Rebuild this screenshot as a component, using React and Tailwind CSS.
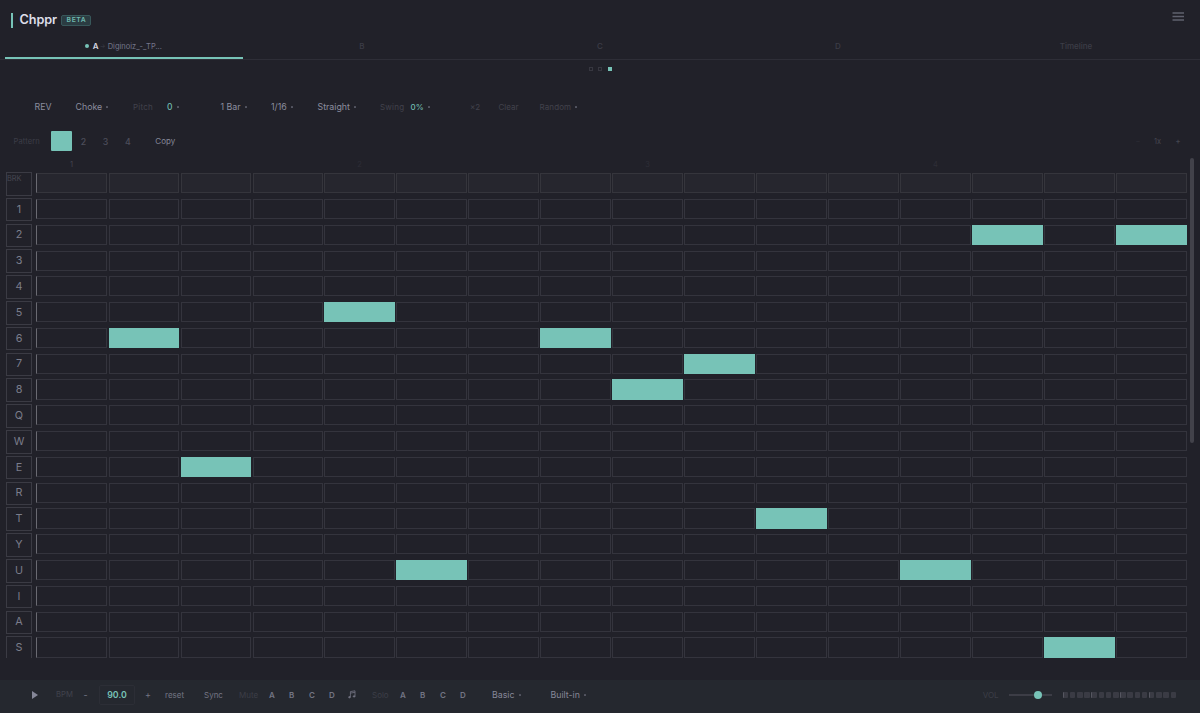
// src/App.jsx
import React from "react";

const ROWS = [
  { key: "BRK", on: [] },
  { key: "1", on: [] },
  { key: "2", on: [13, 15] },
  { key: "3", on: [] },
  { key: "4", on: [] },
  { key: "5", on: [4] },
  { key: "6", on: [1, 7] },
  { key: "7", on: [9] },
  { key: "8", on: [8] },
  { key: "Q", on: [] },
  { key: "W", on: [] },
  { key: "E", on: [2] },
  { key: "R", on: [] },
  { key: "T", on: [10] },
  { key: "Y", on: [] },
  { key: "U", on: [5, 12] },
  { key: "I", on: [] },
  { key: "A", on: [] },
  { key: "S", on: [14] },
];

const STEPS = Array.from({ length: 16 }, (_, i) => i);

function Dot() {
  return <span className="ml-[4px] size-[2px] shrink-0 rounded-[0.5px] bg-[#555662]" />;
}

// text button, optionally followed by the small dropdown dot
function Item({ className, children, dot }) {
  return (
    <div className={`flex shrink-0 items-center whitespace-nowrap ${className}`}>
      <span>{children}</span>
      {dot && <Dot />}
    </div>
  );
}

function Header() {
  return (
    <header className="flex h-[33px] items-start justify-between pr-[16px] pl-[11px]">
      <div className="flex items-center pt-[12px]">
        <span className="h-[15px] w-[1.5px] bg-[#77c3b7]" />
        <h1 className="ml-[7px] w-[41.5px] text-[12.7px] leading-[16px] font-semibold tracking-[-0.1px] text-[#dddee8]">
          Chppr
        </h1>
        <span className="flex h-[11px] w-[30px] items-center justify-center rounded-[2px] border border-[#38575a] bg-[#2b3c42] pt-[1px] pl-[1px] text-[6.8px] leading-none font-semibold tracking-[0.6px] text-[#6fb9ae]">
          BETA
        </span>
      </div>
      <button className="mt-[12px]">
        <svg width="12" height="9" viewBox="0 0 12 9" stroke="#5f616e" strokeWidth="1.4">
          <path d="M0.5 1H12M0.5 4.5H12M0.5 8H12" />
        </svg>
      </button>
    </header>
  );
}

function Tabs() {
  return (
    <nav className="grid h-[27px] grid-cols-5 border-b border-[#2e2e37] px-[5px] text-[8px] text-[#3c3d47]">
      <div className="flex justify-center border-b-2 border-[#77c3b7] pt-[7px] leading-[12px]">
        <div className="flex h-[12px] items-center">
          <span className="size-[4px] rounded-full bg-[#77c3b7]" />
          <span className="ml-[3.5px] font-semibold text-[#d6d7e0]">A</span>
          <span className="ml-[1px] w-[8px] text-[6px] text-[#3c3d47]">→</span>
          <span className="w-[55px] pt-[1px] text-[7.5px] whitespace-nowrap text-[#74768a]">Diginoiz_-_TP...</span>
        </div>
      </div>
      {["B", "C", "D", "Timeline"].map((t) => (
        <div key={t} className="pt-[7px] text-center leading-[12px] font-medium">
          {t}
        </div>
      ))}
    </nav>
  );
}

function Toolbar() {
  return (
    <div className="flex h-[16px] items-center pl-[34.5px] text-[8.8px] text-[#8b8d9e]">
      <Item className="w-[41px]">REV</Item>
      <Item className="w-[57.5px]" dot>Choke</Item>
      <Item className="w-[34px] text-[8px] tracking-[0.2px] text-[#41424c]">Pitch</Item>
      <Item className="w-[53.5px] text-[8.5px] font-medium text-[#6fb9ae]" dot>0</Item>
      <Item className="w-[50.5px]" dot>1 Bar</Item>
      <Item className="w-[46.5px]" dot>1/16</Item>
      <Item className="w-[62.5px]" dot>Straight</Item>
      <Item className="w-[30.5px] text-[8px] tracking-[0.2px] text-[#41424c]">Swing</Item>
      <Item className="w-[59.5px] text-[8px] font-medium text-[#6fb9ae]" dot>0%</Item>
      <Item className="w-[28.5px] text-[8px] text-[#41424c]">×2</Item>
      <Item className="w-[41px] text-[8px] text-[#41424c]">Clear</Item>
      <Item className="text-[8px] tracking-[0.1px] text-[#41424c]" dot>Random</Item>
    </div>
  );
}

function PatternBar() {
  return (
    <div className="flex h-[20px] items-center pl-[13.5px] text-[8px]">
      <Item className="w-[37.8px] pt-[1px] text-[7.6px] tracking-[0.1px] text-[#3c3d47]">Pattern</Item>
      <span className="h-[20px] w-[20.5px] shrink-0 rounded-[1px] bg-[#77c3b7]" />
      {["2", "3", "4"].map((n) => (
        <span key={n} className="w-[22.2px] shrink-0 pt-[1px] pl-[1px] text-center text-[8.8px] font-medium text-[#4d4e5b]">
          {n}
        </span>
      ))}
      <Item className="ml-[17px] text-[#858798]">Copy</Item>
      <div className="ml-auto flex items-center pt-[1px] text-[7.5px] text-[#454650]">
        <span className="w-[18.5px] text-[#2d2d36]">−</span>
        <span className="w-[21.5px]">1x</span>
        <span className="w-[24.5px] font-semibold">+</span>
      </div>
    </div>
  );
}

function Step({ row, index, on }) {
  let style = "border-[#34343d]";
  if (on) style = "border-[#77c3b7] bg-[#77c3b7]";
  else if (row === "BRK") style = "border-[#35353c] bg-[#26262e]";
  return (
    <div
      className={`h-[20.2px] border ${style} ${index === 0 ? "-ml-[0.6px] border-l-[#6a6a72]" : ""}`}
    />
  );
}

function Sequencer() {
  return (
    <div className="flex h-[499.5px] justify-between overflow-hidden">
      <div className="flex flex-col pl-[6px]">
        <div className="ml-[29.5px] grid h-[13.4px] w-[1152px] grid-cols-16 text-center text-[7.5px] leading-[13px] text-[#2e2e37]">
          {STEPS.map((s) => (
            <span key={s} className={s === 0 ? "text-[#44454f]" : ""}>
              {s % 4 === 0 ? s / 4 + 1 : ""}
            </span>
          ))}
        </div>
        {ROWS.map((row) => (
          <div key={row.key} className="flex h-[25.8px] shrink-0 items-center">
            {row.key === "BRK" ? (
              <div className="h-[23.6px] w-[26px] border border-[#3b3b44] text-[7.4px] leading-[11px] text-[#464751]">
                BRK
              </div>
            ) : (
              <div className="flex h-[23.6px] w-[26px] items-center justify-center border border-[#3b3b44] text-[10.8px] text-[#7b7d8b]">
                {row.key}
              </div>
            )}
            <div className="mb-[1.4px] ml-[4.6px] grid w-[1150.2px] grid-cols-16 gap-[1.4px]">
              {STEPS.map((s) => (
                <Step key={s} row={row.key} index={s} on={row.on.includes(s)} />
              ))}
            </div>
          </div>
        ))}
      </div>
      <div className="mr-[6px] h-[285px] w-[4px] rounded-full bg-[#42424a]" />
    </div>
  );
}

function Footer() {
  return (
    <footer className="mt-auto flex h-[33px] items-center bg-[#25282f] pb-[4px] pl-[32px] text-[8px] text-[#737584]">
      <svg className="mr-[18px] shrink-0" width="6" height="8" viewBox="0 0 6 8">
        <path d="M0 0L6 4L0 8Z" fill="#858798" />
      </svg>
      <Item className="w-[27.5px] text-[7.7px] text-[#41434d]">BPM</Item>
      <Item className="w-[15.5px] text-[9px]">-</Item>
      <div className="flex h-[20px] w-[36px] shrink-0 items-center justify-center rounded-[2px] border border-[#2c2e36] text-[8.8px] font-semibold text-[#77c3b7]">
        90.0
      </div>
      <Item className="ml-[10px] w-[20px] text-[9px]">+</Item>
      <Item className="w-[39px]">reset</Item>
      <Item className="w-[35px]">Sync</Item>
      <Item className="w-[30px] text-[#3c3e47]">Mute</Item>
      {["A", "B", "C", "D"].map((t) => (
        <Item key={t} className="w-[20px] font-semibold">{t}</Item>
      ))}
      <svg className="mr-[16px] -ml-[1px] shrink-0" width="8" height="9" viewBox="0 0 8 9" fill="none" stroke="#737584" strokeWidth="0.8">
        <path d="M2.4 7V1.6L7 0.8V6.2M2.4 3.1L7 2.3" />
        <ellipse cx="1.5" cy="7.2" rx="0.9" ry="0.7" fill="#737584" />
        <ellipse cx="6.1" cy="6.4" rx="0.9" ry="0.7" fill="#737584" />
      </svg>
      <Item className="w-[28px] text-[#3c3e47]">Solo</Item>
      {["A", "B", "C", "D"].map((t) => (
        <Item key={t} className="w-[20px] font-semibold">{t}</Item>
      ))}
      <Item className="ml-[12px] w-[58.5px] text-[8.8px] text-[#858798]" dot>Basic</Item>
      <Item className="text-[8.8px] text-[#858798]" dot>Built-in</Item>

      <div className="mr-[24px] ml-auto flex items-center">
        <Item className="w-[26px] text-[#3c3e47]">VOL</Item>
        <div className="relative h-[2px] w-[43px] bg-[#3c3d46]">
          <span className="absolute top-[-3px] left-[25px] size-[8px] rounded-full bg-[#77c3b7]" />
        </div>
        <div className="ml-[11px] flex gap-[1.7px]">
          {STEPS.map((s) => (
            <span
              key={s}
              className={`h-[6px] w-[5.5px] rounded-[1px] bg-[#3a3b44] ${s % 4 === 0 ? "border-l border-[#565761]" : ""}`}
            />
          ))}
        </div>
      </div>
    </footer>
  );
}

export default function App() {
  return (
    <div className="flex h-[713px] w-[1200px] flex-col overflow-hidden bg-[#212129] font-['Inter',sans-serif]">
      <Header />
      <Tabs />
      {/* view switcher */}
      <div className="flex justify-center gap-[5.5px] pt-[7px]">
        <span className="size-[4px] border border-[#373740]" />
        <span className="size-[4px] border border-[#373740]" />
        <span className="size-[4px] bg-[#77c3b7]" />
      </div>
      <div className="mt-[28px]">
        <Toolbar />
      </div>
      <div className="mt-[16px] mb-[7px]">
        <PatternBar />
      </div>
      <Sequencer />
      <Footer />
    </div>
  );
}
